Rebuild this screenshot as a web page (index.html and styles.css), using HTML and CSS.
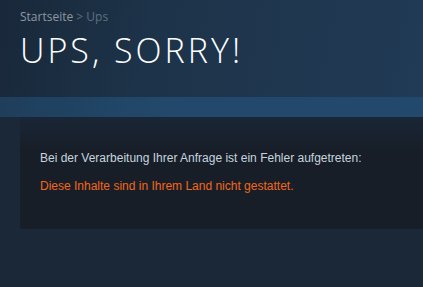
FILE: index.html
```html
<!DOCTYPE html>
<html lang="de">
<head>
    <meta charset="UTF-8">
    <title>Ups, Sorry!</title>
    <link rel="stylesheet" href="styles.css">
</head>
<body>
    <div class="page-head">
        <div class="breadcrumbs">
            <a href="#">Startseite</a> <span class="sep">&gt; Ups</span>
        </div>
        <h1 class="title">UPS, SORRY!</h1>
    </div>
    <div class="band"></div>
    <div class="error-box">
        <p>Bei der Verarbeitung Ihrer Anfrage ist ein Fehler aufgetreten:</p>
        <p class="error">Diese Inhalte sind in Ihrem Land nicht gestattet.</p>
    </div>
</body>
</html>
```

FILE: styles.css
```css
body {
    margin: 0;
    background-color: #1b2838;
    font-family: Arial, "Liberation Sans", sans-serif;
    font-size: 12px;
}

.page-head {
    height: 97px;
    padding: 9px 20px 0;
    box-sizing: border-box;
    background: linear-gradient(100deg, #19283a 0%, #1d3349 35%, #213a55 100%);
}

.breadcrumbs {
    font-family: "Open Sans", sans-serif;
    font-size: 12px;
    color: #8f98a0;
    line-height: 16px;
}

.breadcrumbs a {
    color: #8f98a0;
    text-decoration: none;
}

.breadcrumbs .sep {
    color: #5d7081;
}

.title {
    margin: 5px 0 0;
    font-family: "Open Sans", sans-serif;
    font-weight: 300;
    font-size: 34px;
    letter-spacing: 3px;
    line-height: 40px;
    color: #ffffff;
}

.band {
    height: 20px;
    background: linear-gradient(90deg, #1f3e5c 0%, #22496b 40%, #22496b 100%);
}

.error-box {
    margin-left: 20px;
    height: 112px;
    padding: 34px 20px 0;
    box-sizing: border-box;
    background: linear-gradient(180deg, #1a2636 0%, #171e28 30%, #171e28 100%);
    color: #c6d4df;
}

.error-box p {
    margin: 0 0 14px;
    line-height: 14px;
}

.error-box .error {
    color: #f4661a;
}
```
